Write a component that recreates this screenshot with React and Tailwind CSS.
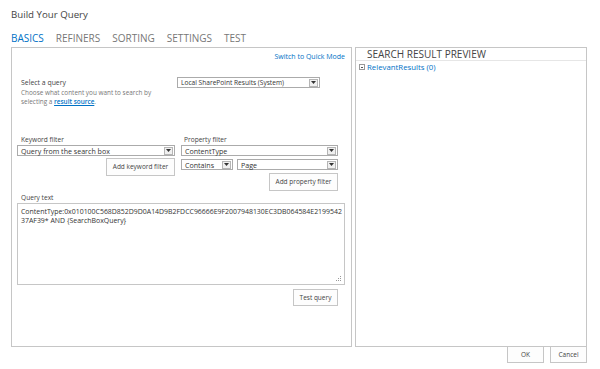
import React from "react";

function Arrow() {
  return (
    <div className="w-[9px] h-[8px] border border-[#b5b5b5] bg-[#f0f0f0] flex items-center justify-center mr-[1px]">
      <svg width="5" height="3" viewBox="0 0 5 3"><path d="M0 0h5L2.5 3z" fill="#333" /></svg>
    </div>
  );
}

function Select({ text, className, size = "text-[7px]" }) {
  return (
    <div className={"h-[11px] border border-[#ababab] bg-white flex items-center justify-between pl-[3px] " + className}>
      <span className={size + " leading-[10px] text-[#333] whitespace-nowrap"}>{text}</span>
      <Arrow />
    </div>
  );
}

function Btn({ children, className }) {
  return (
    <div className={"border border-[#c6c6c6] bg-[#fdfdfd] flex items-center justify-center text-[6.5px] text-[#444] " + className}>
      {children}
    </div>
  );
}

export default function App() {
  return (
    <div className="w-[600px] h-[369px] bg-white overflow-hidden text-[#444] font-['Open_Sans','Noto_Sans',sans-serif]">
      <div className="pl-[11px] pt-[7px] text-[9.7px] leading-[16px] text-[#444]">Build Your Query</div>
      <div className="flex gap-[12px] pl-[11px] mt-[8px] text-[10px] leading-[14px] text-[#777]">
        <span className="text-[#0072c6]">BASICS</span>
        <span>REFINERS</span>
        <span>SORTING</span>
        <span>SETTINGS</span>
        <span>TEST</span>
      </div>
      <div className="flex pl-[11px] gap-[3px] mt-[2px]">
        <div className="w-[341px] h-[300px] border border-[#c6c6c6] flex flex-col">
          <div className="pt-[4px] pr-[6px] text-right text-[7px] leading-[10px] text-[#0072c6]">Switch to Quick Mode</div>
          <div className="flex mt-[15px]">
            <div className="w-[165px] pl-[9px]">
              <div className="mt-[1px] text-[6.9px] leading-[10px] text-[#444]">Select a query</div>
              <div className="text-[6.4px] leading-[9px] text-[#777]">Choose what content you want to search by</div>
              <div className="text-[6.4px] leading-[9px] text-[#777]">selecting a <span className="text-[#0072c6] underline font-semibold">result source</span>.</div>
            </div>
            <Select text="Local SharePoint Results (System)" className="w-[143px]" size="text-[6.6px]" />
          </div>
          <div className="flex mt-[29px] pl-[5px] gap-[6px]">
            <div className="w-[158px] flex flex-col">
              <div className="ml-[4px] text-[6.6px] leading-[10px] text-[#444]">Keyword filter</div>
              <Select text="Query from the search box" className="w-[158px]" size="text-[7.1px]" />
              <Btn className="self-end mt-[2px] w-[69px] h-[18px]">Add keyword filter</Btn>
            </div>
            <div className="w-[157px] flex flex-col">
              <div className="ml-[3px] text-[6.6px] leading-[10px] text-[#444]">Property filter</div>
              <Select text="ContentType" className="w-[157px]" size="text-[7.1px]" />
              <div className="flex gap-[4px] mt-[3px]">
                <Select text="Contains" className="w-[52px]" size="text-[7.1px]" />
                <Select text="Page" className="w-[101px]" size="text-[7.1px]" />
              </div>
              <Btn className="self-end mt-[3px] w-[69px] h-[18px]">Add property filter</Btn>
            </div>
          </div>
          <div className="mt-[2px] ml-[9px] text-[6.6px] leading-[10px] text-[#444]">Query text</div>
          <div className="ml-[5px] w-[328px] h-[82px] border border-[#c6c6c6] pt-[3px] pl-[3px] relative">
            <div className="text-[6.95px] leading-[9px] text-[#333] whitespace-nowrap">ContentType:0x010100C568D852D9D0A14D9B2FDCC96666E9F2007948130EC3DB064584E2199542</div>
            <div className="text-[6.95px] leading-[9px] text-[#333] whitespace-nowrap">37AF39* AND {"{SearchBoxQuery}"}</div>
            <svg className="absolute right-[2px] bottom-[2px]" width="6" height="6" viewBox="0 0 6 6">
              <rect x="4" y="0" width="1" height="1" fill="#999" />
              <rect x="2" y="2" width="1" height="1" fill="#999" />
              <rect x="4" y="2" width="1" height="1" fill="#999" />
              <rect x="0" y="4" width="1" height="1" fill="#999" />
              <rect x="2" y="4" width="1" height="1" fill="#999" />
              <rect x="4" y="4" width="1" height="1" fill="#999" />
            </svg>
          </div>
          <div className="flex justify-end mr-[13px] mt-[4px]">
            <Btn className="w-[45px] h-[17px]">Test query</Btn>
          </div>
        </div>
        <div className="w-[232px] h-[300px] border border-[#c6c6c6] flex flex-col">
          <div className="h-[13px] pl-[11px] text-[10px] leading-[12px] text-[#444] border-b border-[#e6e6e6]">SEARCH RESULT PREVIEW</div>
          <div className="flex items-center mt-[1px] pl-[3px] gap-[2px]">
            <div className="w-[6px] h-[6px] border border-[#999] flex items-center justify-center">
              <div className="w-[2px] h-[1px] bg-[#555]" />
            </div>
            <span className="text-[7.8px] leading-[10px] text-[#0072c6]">RelevantResults (0)</span>
          </div>
        </div>
      </div>
      <div className="flex justify-end gap-[6px] pr-[13px] mt-[-1px]">
        <Btn className="w-[37px] h-[17px]">OK</Btn>
        <Btn className="w-[37px] h-[17px]">Cancel</Btn>
      </div>
    </div>
  );
}
